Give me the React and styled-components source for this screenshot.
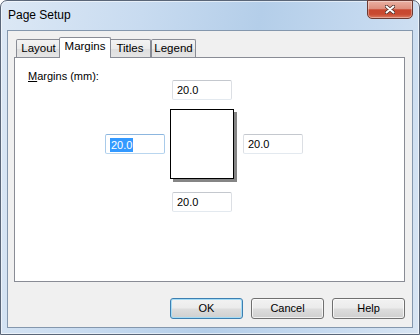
import React from "react";
import styled, { createGlobalStyle } from "styled-components";

const GlobalStyle = createGlobalStyle`
  html, body {
    margin: 0;
    width: 420px;
    height: 335px;
    overflow: hidden;
    background: #ffffff;
    font-family: "Liberation Sans", Arial, sans-serif;
  }
`;

const tabs = [
  { label: "Layout", width: 45 },
  { label: "Margins", width: 48, active: true },
  { label: "Titles", width: 42 },
  { label: "Legend", width: 45 },
];

function App() {
  return (
    <>
      <GlobalStyle />
      <Window>
        <TitleBar>
          <Title>Page Setup</Title>
          <CloseButton>
            <svg width="10" height="9" viewBox="0 0 10 9">
              <path d="M1.5 1.5 L8.5 7.5 M8.5 1.5 L1.5 7.5" stroke="#4a2b26" strokeWidth="3.6" strokeLinecap="round" fill="none" />
              <path d="M1.5 1.5 L8.5 7.5 M8.5 1.5 L1.5 7.5" stroke="#ffffff" strokeWidth="2" strokeLinecap="round" fill="none" />
            </svg>
          </CloseButton>
        </TitleBar>

        <Client>
          <TabStrip>
            {tabs.map((t) => (
              <Tab key={t.label} $w={t.width} $active={t.active}>
                {t.label}
              </Tab>
            ))}
          </TabStrip>

          <TabPanel>
            <MarginsLabel>
              <u>M</u>argins (mm):
            </MarginsLabel>
            <MarginGrid>
              <Field $area="top">20.0</Field>
              <Field $area="left" $focused>
                <Selected>20.0</Selected>
              </Field>
              <PagePreview />
              <Field $area="right">20.0</Field>
              <Field $area="bottom">20.0</Field>
            </MarginGrid>
          </TabPanel>

          <Footer>
            <Button $default>OK</Button>
            <Button>Cancel</Button>
            <Button>Help</Button>
          </Footer>
        </Client>
      </Window>
    </>
  );
}

export default App;

const Window = styled.div`
  box-sizing: border-box;
  width: 420px;
  height: 335px;
  border: 1px solid #5a6678;
  border-radius: 7px 7px 0 0;
  background: linear-gradient(100deg, #dce8f5 0%, #c8dbf0 30%, #b4cee9 55%, #c6daf0 80%, #d8e5f3 100%);
  box-shadow: inset 0 0 0 1px rgba(255, 255, 255, 0.55);
  display: flex;
  flex-direction: column;
`;

const TitleBar = styled.div`
  height: 29px;
  flex: none;
  display: flex;
  justify-content: space-between;
  align-items: flex-start;
  padding: 0 6px 0 7px;
`;

const Title = styled.div`
  margin-top: 7px;
  font-size: 12px;
  line-height: 15px;
  color: #000;
`;

const CloseButton = styled.div`
  box-sizing: border-box;
  width: 46px;
  height: 19px;
  margin-top: -1px;
  display: flex;
  align-items: center;
  justify-content: center;
  border: 1px solid #6b3a33;
  border-radius: 0 0 5px 5px;
  background: linear-gradient(#eab0a2 0%, #de907f 45%, #c8472f 52%, #c84a31 78%, #dc7c62 100%);
  box-shadow: inset 0 0 0 1px rgba(255, 255, 255, 0.35);
`;

const Client = styled.div`
  flex: 1;
  margin: 0 6px 6px;
  border: 1px solid #8497ad;
  background: #f0f0f0;
  padding: 6px 7px 0 6px;
  display: flex;
  flex-direction: column;
`;

const TabStrip = styled.div`
  position: relative;
  z-index: 1;
  height: 20px;
  flex: none;
  display: flex;
  align-items: flex-end;
  padding-left: 2px;
`;

// selected tab grows 2px on each side and covers the panel's top border
const Tab = styled.div`
  box-sizing: border-box;
  position: relative;
  width: ${(p) => (p.$active ? p.$w + 4 : p.$w)}px;
  height: ${(p) => (p.$active ? 21 : 18)}px;
  margin: ${(p) => (p.$active ? "0 -2px -1px" : "0")};
  z-index: ${(p) => (p.$active ? 2 : 1)};
  border: 1px solid #898c95;
  border-bottom: none;
  border-radius: 2px 2px 0 0;
  background: ${(p) =>
    p.$active ? "#ffffff" : "linear-gradient(#f3f3f3 0%, #ebebeb 50%, #dedede 51%, #e5e5e5 100%)"};
  font-size: 11.5px;
  line-height: 17px;
  text-align: center;
  color: #000;
`;

const TabPanel = styled.div`
  box-sizing: border-box;
  height: 225px;
  flex: none;
  border: 1px solid #898c95;
  background: #ffffff;
  padding: 12px 0 0 13px;
`;

const MarginsLabel = styled.div`
  font-size: 11px;
  line-height: 13px;
  color: #000;
`;

const MarginGrid = styled.div`
  display: grid;
  grid-template-columns: 60px 64px 60px;
  grid-template-areas:
    ". top ."
    "left page right"
    ". bottom .";
  column-gap: 5px;
  row-gap: 9px;
  margin: -3px 0 0 77px;
`;

const Field = styled.div`
  grid-area: ${(p) => p.$area};
  box-sizing: border-box;
  width: 60px;
  height: 20px;
  align-self: center;
  justify-self: ${(p) => (p.$area === "top" || p.$area === "bottom" ? "center" : "start")};
  margin-left: ${(p) => (p.$area === "right" ? "4px" : "0")};
  margin-top: ${(p) => (p.$area === "bottom" ? "4px" : "0")};
  border: 1px solid;
  border-color: ${(p) => (p.$focused ? "#8cb6df #a9cbea #b9d6ef #a9cbea" : "#c4c8ce #dcdfe4 #e3e9ef #dcdfe4")};
  border-radius: 2px;
  background: #fff;
  padding-left: 4px;
  font-size: 11px;
  line-height: 18px;
  color: #000;
`;

const Selected = styled.span`
  display: inline-block;
  background: #3399ff;
  color: #fff;
  line-height: 14px;
  vertical-align: middle;
  padding: 0 1px;
`;

const PagePreview = styled.div`
  grid-area: page;
  box-sizing: border-box;
  width: 64px;
  height: 70px;
  border: 1px solid #000;
  background: #fff;
  box-shadow: 3px 3px 0 #858585;
`;

const Footer = styled.div`
  display: flex;
  justify-content: flex-end;
  gap: 8px;
  margin-top: 16px;
`;

const Button = styled.div`
  box-sizing: border-box;
  width: 73px;
  height: 21px;
  border: 1px solid ${(p) => (p.$default ? "#3c7fb1" : "#707070")};
  border-radius: 3px;
  background: linear-gradient(#f2f2f2 0%, #ebebeb 48%, #dddddd 52%, #cfcfcf 100%);
  box-shadow: ${(p) =>
    p.$default ? "inset 0 0 0 1px #a6dcf5" : "inset 0 0 0 1px rgba(255, 255, 255, 0.7)"};
  font-size: 11px;
  line-height: 19px;
  text-align: center;
  color: #000;
`;
